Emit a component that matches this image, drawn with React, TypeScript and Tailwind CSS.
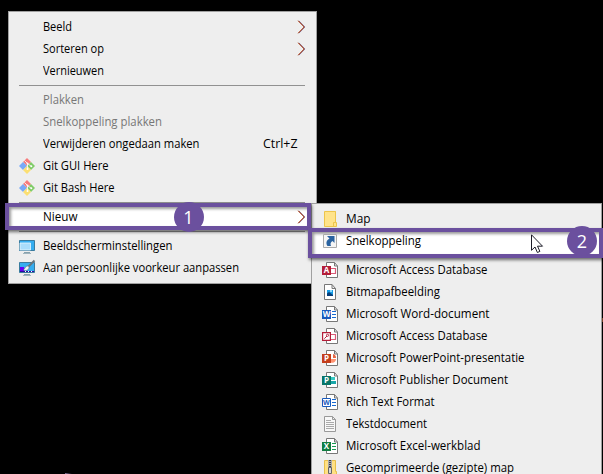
import React, { useLayoutEffect, useRef } from "react";

// Condenses a label so that it fills the width given for it.
function Label({ text, width }: { text: string; width: number }) {
  const ref = useRef<HTMLSpanElement>(null);
  useLayoutEffect(() => {
    const el = ref.current;
    if (!el) return;
    el.style.transform = "none";
    const natural = el.getBoundingClientRect().width;
    el.style.transform = `scaleX(${width / natural})`;
  }, [text, width]);
  return <span ref={ref} className="inline-block origin-left whitespace-pre pb-px leading-[21px]">{text}</span>;
}

function Chevron() {
  return (
    <svg className="h-[14px] w-[9px]" viewBox="0 0 9 14" fill="none">
      <path d="M1 .8 7 7 1 13.2" stroke="#e08a4a" strokeWidth="1" />
      <path d="M2 .8 8 7 2 13.2" stroke="#8fb0e0" strokeWidth=".7" />
      <path d="M1.5 .8 7.5 7 1.5 13.2" stroke="#7a1a20" strokeWidth=".9" />
    </svg>
  );
}

function Git() {
  return (
    <svg className="size-4" viewBox="0 0 16 16">
      <path d="M8 0 12 4 8 8 4 4Z" fill="#f77c7c" />
      <path d="M4 4 8 8 4 12 0 8Z" fill="#79a9f7" />
      <path d="M12 4 16 8 12 12 8 8Z" fill="#80cc68" />
      <path d="M8 8 12 12 8 16 4 12Z" fill="#fbdf72" />
      <path d="M5.5 2.5 8.5 5.5v5M8.5 5.5l4 3" stroke="#f6f6f6" strokeWidth=".9" fill="none" />
      <circle cx="8.5" cy="5.5" r="1" fill="#fff" />
      <circle cx="8.5" cy="11" r="1" fill="#fff" />
      <circle cx="12.3" cy="8.3" r="1" fill="#fff" />
    </svg>
  );
}

function Display({ brush = false }: { brush?: boolean }) {
  return (
    <svg className="size-4 overflow-visible" viewBox="0 0 16 16">
      <path d="M.5 2.5h15v10H.5z" fill="#35adf0" stroke="#397b9e" />
      <path d="M5 14h6v1H5zM4 15h8v.7H4z" fill="#87a1ad" />
      {brush ? (
        <>
          <path d="M1 7h4v5H1z" fill="#6500f4" />
          <path d="M1 11h14v1H1z" fill="#2a08a0" />
          <path d="M6 11h1v1H6zM9 11h1v1H9zM12 11h1v1h-1z" fill="#fff" />
          <path d="M15.5.5 9.5 6.5" stroke="#68757d" strokeWidth="2" />
          <path d="M9.3 6c-3-.6-3 3-5 4 3 1.2 5.8 0 5.7-3z" fill="#f2f2f2" stroke="#52626c" strokeWidth=".5" />
        </>
      ) : (
        <path d="M1 5h10.5v7H1z" fill="#a8dcfb" stroke="#e4f6ff" strokeWidth=".8" />
      )}
    </svg>
  );
}

function Page() {
  return <path d="M4.5.5h8l3 3.5v11.5h-11z M12.5.5v3.5h3" fill="#fff" stroke="#777" />;
}

function Office({ letter, color, detail }: { letter: string; color: string; detail: React.ReactNode }) {
  return (
    <svg className="size-4" viewBox="0 0 16 16">
      <Page />
      {detail}
      <path d="M0 4h9v9H0z" fill={color} />
      <text x="4.5" y="11.4" textAnchor="middle" fill="#fff" className="font-['Open_Sans',sans-serif] text-[8px] font-bold">{letter}</text>
    </svg>
  );
}

function Lines({ color }: { color: string }) {
  return <path d="M10 5.5h4M10 8.5h4M10 11.5h4" stroke={color} />;
}

const accessDetail = <path d="M9 6.5h4.5v5H9" fill="none" stroke="#d95b78" strokeWidth="1.2" />;

const folder = (
  <svg className="size-4" viewBox="0 0 16 16">
    <path d="M2.5.5h11v11h1v4h-12z" fill="#ffe38a" stroke="#edc54b" />
    <path d="M11.5 15.5v-4h2v-11" fill="none" stroke="#edc54b" />
  </svg>
);
const shortcut = (
  <svg className="size-4" viewBox="0 0 16 16">
    <path d="M1.5 1.5h13v13h-13z" fill="#f5f5f5" stroke="#aaa" />
    <path d="M5 3h7.500v7l-2-2c-2 1-2.500 3-1.500 5H5.500c-2-3-1-6 2-7.500z" fill="#2962a0" />
  </svg>
);
const bitmap = (
  <svg className="size-4" viewBox="0 0 16 16">
    <path d="M2.5.5h7.500l3.500 4v11h-11z M10 .5v4h3.500" fill="#fff" stroke="#777" />
    <path d="M5 6h6v6H5z" fill="#159be5" />
    <path d="M5 9.500 7 8l4 3v1H5z" fill="#073e7a" />
    <path d="M8 6h2v2H8z" fill="#8adaff" />
  </svg>
);
const word = <Office letter="W" color="#185abd" detail={<Lines color="#1769d2" />} />;
const access = <Office letter="A" color="#b41d38" detail={accessDetail} />;
const accessKey = (
  <svg className="size-4" viewBox="0 0 16 16">
    <Page />{accessDetail}
    <path d="M.6 4.600h7.800v7.800H.6z" fill="#fff" stroke="#b41d38" strokeWidth="1.2" />
    <path d="m2.300 10.700 2.700-2.700" stroke="#b41d38" /><circle cx="5.500" cy="7.300" r="1.100" fill="none" stroke="#b41d38" strokeWidth=".9" />
  </svg>
);
const power = <Office letter="P" color="#c43e1c" detail={<><path d="M9 5a4 4 0 1 0 5 5V9H9z" fill="#ff9473" /><path d="M11 4v4h3a4 4 0 0 0-3-4" fill="#e76845" /></>} />;
const publisher = <Office letter="P" color="#077568" detail={<><path d="M9 5h4v3H9z" fill="#38c8c3" /><path d="M9 9h5v3H9z" fill="#1aa7aa" /></>} />;
const rich = (
  <svg className="size-4" viewBox="0 0 16 16">
    <Page /><Lines color="#1769d2" />
    <path d="M.5 4.500h8v8h-8z" fill="#fff" stroke="#185abd" />
    <text x="4.5" y="11.2" textAnchor="middle" fill="#185abd" className="font-['Open_Sans',sans-serif] text-[7px] font-bold">W</text>
  </svg>
);
const textDocument = (
  <svg className="size-4" viewBox="0 0 16 16">
    <path d="M2.5.5h8l3 3v12h-11z M10.5.5v3h3" fill="#f8f8f8" stroke="#999" />
    <path d="M4 4.500h5M4 6.500h8M4 8.500h8M4 10.500h8M4 12.500h8" stroke="#aaa" />
  </svg>
);
const excel = <Office letter="X" color="#107c41" detail={<Lines color="#169a52" />} />;
const zip = (
  <svg className="size-4" viewBox="0 0 16 16">
    <path d="M2.5.5h11v11h1v4h-12z" fill="#ffe082" stroke="#e7bf49" />
    <path d="M6 0h4v11H6z" fill="#aaa" />
    <path d="M8 0v11" stroke="#444" strokeWidth="2" strokeDasharray="1 1" />
    <path d="M6.500 7.500h3v6h-3z" fill="#d8d8d8" stroke="#666" />
  </svg>
);

type Item = {
  text: string;
  width: number;
  icon?: React.ReactNode;
  arrow?: boolean;
  disabled?: boolean;
  keys?: boolean;
  step?: { number: string; frame: string; badge: string };
};

const groups: Item[][] = [
  [{ text: "Beeld", width: 29, arrow: true }, { text: "Sorteren op", width: 61, arrow: true }, { text: "Vernieuwen", width: 61 }],
  [
    { text: "Plakken", width: 41, disabled: true },
    { text: "Snelkoppeling plakken", width: 119, disabled: true },
    { text: "Verwijderen ongedaan maken", width: 156.5, keys: true },
    { text: "Git GUI Here", width: 65.5, icon: <Git /> },
    { text: "Git Bash Here", width: 71.5, icon: <Git /> },
  ],
  [{ text: "Nieuw", width: 34.5, arrow: true, step: { number: "1", frame: "-left-[14px] -right-[6px] -top-[3px] -bottom-[2px]", badge: "left-[154.5px]" } }],
  [
    { text: "Beeldscherminstellingen", width: 129.5, icon: <Display /> },
    { text: "Aan persoonlijke voorkeur aanpassen", width: 196, icon: <Display brush /> },
  ],
];

const newGroups: Item[][] = [
  [
    { text: "Map", width: 24.5, icon: folder },
    { text: "Snelkoppeling", width: 75, icon: shortcut, step: { number: "2", frame: "-left-[14px] -right-[13px] -top-[2px] -bottom-[6px]", badge: "-right-[7px]" } },
  ],
  [
    { text: "Microsoft Access Database", width: 141.5, icon: access },
    { text: "Bitmapafbeelding", width: 94, icon: bitmap },
    { text: "Microsoft Word-document", width: 143.5, icon: word },
    { text: "Microsoft Access Database", width: 141.5, icon: accessKey },
    { text: "Microsoft PowerPoint-presentatie", width: 178.5, icon: power },
    { text: "Microsoft Publisher Document", width: 162, icon: publisher },
    { text: "Rich Text Format", width: 88.5, icon: rich },
    { text: "Tekstdocument", width: 81, icon: textDocument },
    { text: "Microsoft Excel-werkblad", width: 134.5, icon: excel },
    { text: "Gecomprimeerde (gezipte) map", width: 168, icon: zip },
  ],
];

function Row({ item }: { item: Item }) {
  return (
    <div className={`relative z-20 flex h-[22px] items-center ${item.disabled ? "text-[#777777]" : "text-black"}`}>
      {item.step && (
        <>
          <div className={`absolute -z-10 border-4 border-[#6b509e] bg-white shadow-[1px_2px_3px_rgba(0,0,0,0.55),inset_2px_2px_3px_rgba(0,0,0,0.4)] ${item.step.frame}`} />
          <div className={`absolute z-10 flex size-[30px] items-center justify-center rounded-full bg-[#6b509e] text-[18px] leading-none text-white ${item.step.badge}`}>
            {item.step.number}
          </div>
        </>
      )}
      <span className="mr-2 flex w-4 shrink-0">{item.icon}</span>
      <Label text={item.text} width={item.width} />
      {item.keys && <span className="ml-auto mr-[7px] flex w-[35px]"><Label text="Ctrl+Z" width={34.5} /></span>}
      {item.arrow && <span className="-mr-px ml-auto"><Chevron /></span>}
    </div>
  );
}

function Menu({ groups }: { groups: Item[][] }) {
  return (
    <div className="border border-[#a0a0a0] bg-[#eeeeee] py-1 pl-[10px] pr-[11px]">
      {groups.map((items, g) => (
        <React.Fragment key={g}>
          {g > 0 && <div className="my-[3px] h-px bg-[#919191]" />}
          {items.map((item, i) => <Row key={i} item={item} />)}
        </React.Fragment>
      ))}
    </div>
  );
}

export default function App() {
  return (
    <div className="relative h-[474px] w-[603px] overflow-hidden bg-black font-['Open_Sans','Noto_Sans',sans-serif] text-[12px]">
      <div className="absolute left-[8px] top-[11px] w-[309px]"><Menu groups={groups} /></div>
      <div className="absolute left-[311px] top-[203px] w-[291px]"><Menu groups={newGroups} /></div>

      <svg className="absolute left-[531px] top-[234px] z-30 h-[20px] w-[13px]" viewBox="0 0 13 20">
        <path d="M.5.8v15.5l3.500-3.300 2.400 5.500 2.500-1.100-2.400-5.200h5z" fill="#fff" stroke="#1c1c28" />
      </svg>
      <div className="absolute left-[65px] top-[473px] h-px w-2 bg-linear-to-r from-[#84739b] to-black" />
      <div className="absolute left-[602px] top-[318px] h-1 w-px bg-[#763f24]" />
    </div>
  );
}
